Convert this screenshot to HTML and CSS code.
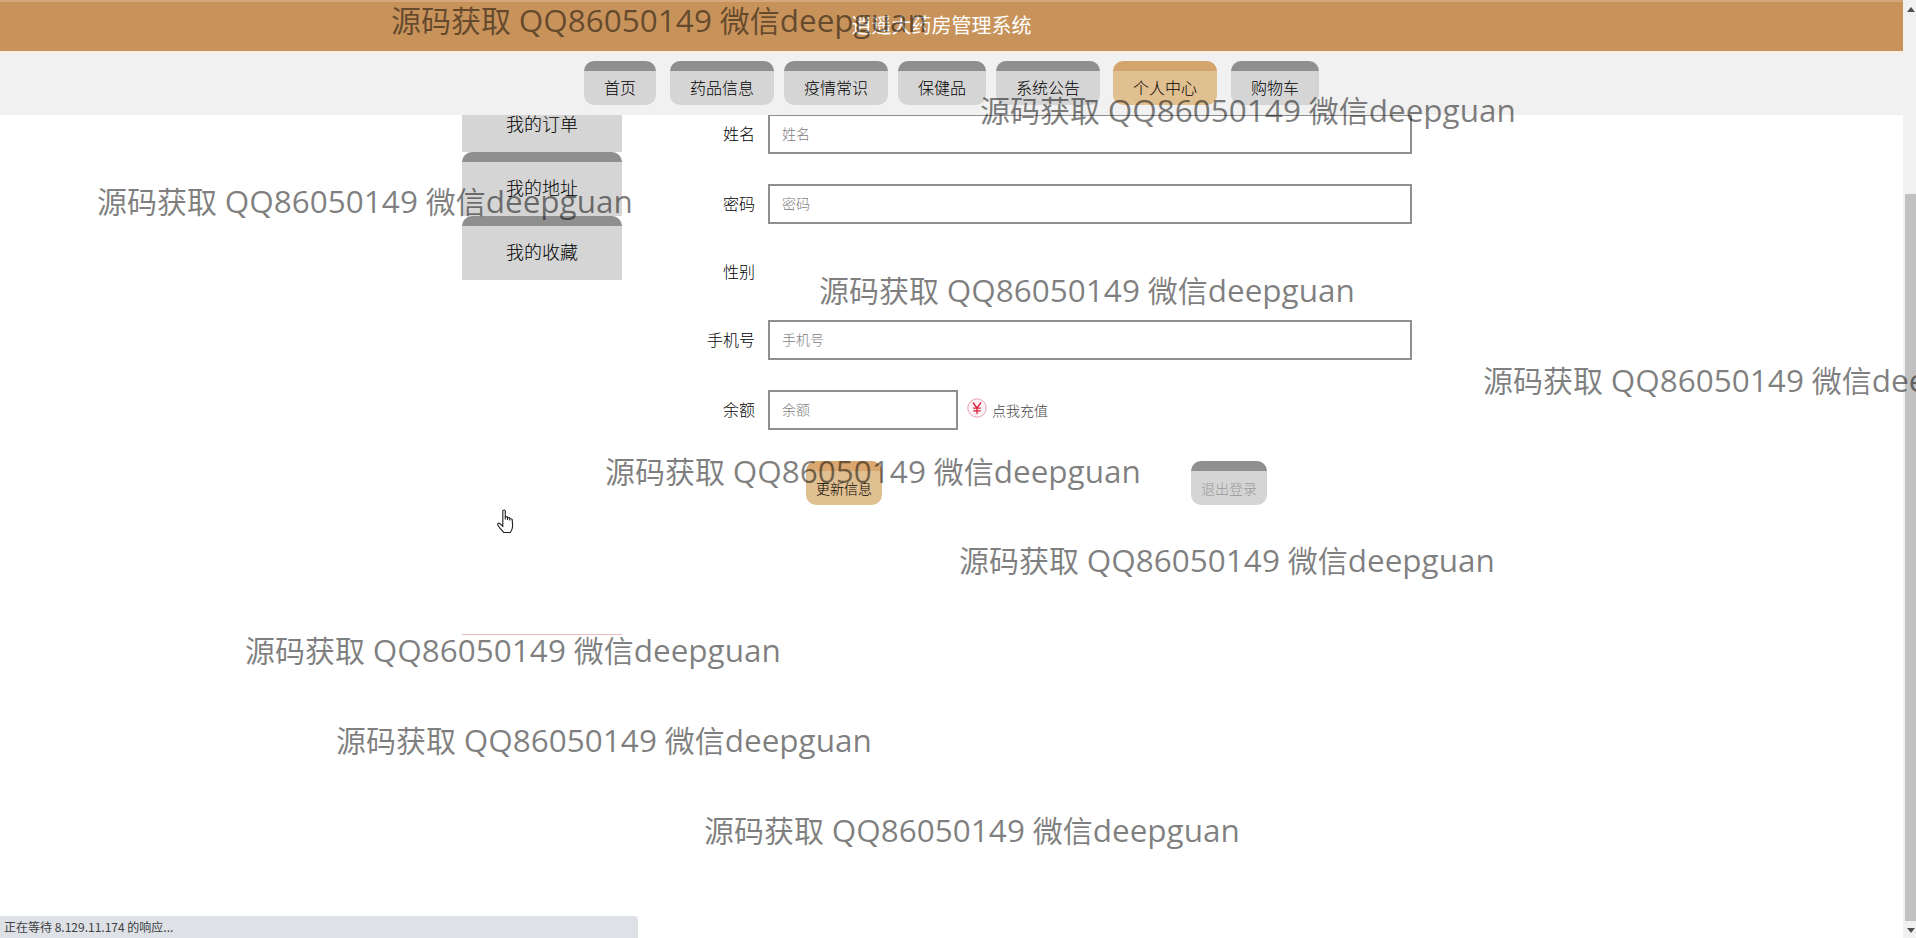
FILE: index.html
```html
<!DOCTYPE html>
<html lang="zh-CN">

<head>
    <meta charset="UTF-8">
    <title>逍遥大药房管理系统</title>
    <link rel="stylesheet" href="styles.css">
</head>

<body>
    <div class="shell">
        <div class="main">
            <div class="top">
                <div class="title">逍遥大药房管理系统</div>
                <div class="nav">
                    <a class="tab">首页</a>
                    <a class="tab">药品信息</a>
                    <a class="tab">疫情常识</a>
                    <a class="tab">保健品</a>
                    <a class="tab">系统公告</a>
                    <a class="tab tab-active">个人中心</a>
                    <a class="tab">购物车</a>
                </div>
            </div>

            <div class="content">
                <div class="side">
                    <a class="side-item">我的订单</a>
                    <a class="side-item">我的地址</a>
                    <a class="side-item">我的收藏</a>
                    <div class="side-rule"></div>
                </div>

                <form class="form">
                    <div class="row">
                        <label class="label">姓名</label>
                        <input class="field" type="text" placeholder="姓名">
                    </div>
                    <div class="row">
                        <label class="label">密码</label>
                        <input class="field" type="text" placeholder="密码">
                    </div>
                    <div class="row row-sex">
                        <label class="label">性别</label>
                    </div>
                    <div class="row">
                        <label class="label">手机号</label>
                        <input class="field" type="text" placeholder="手机号">
                    </div>
                    <div class="row">
                        <label class="label">余额</label>
                        <input class="field field-short" type="text" placeholder="余额">
                        <span class="charge">
                            <svg class="charge-icon" viewBox="0 0 20 20">
                                <circle cx="10" cy="10" r="9.2" fill="#fdf3f5" stroke="#e6a3b0" stroke-width="1"></circle>
                                <path d="M6 4.5 10 9.8 14 4.5M10 9.8V16M6.2 10.2H13.8M6.2 12.8H13.8" fill="none" stroke="#d81e3c" stroke-width="1.3"></path>
                            </svg>
                            <span class="charge-text">点我充值</span>
                        </span>
                    </div>
                    <div class="actions">
                        <a class="btn btn-save">更新信息</a>
                        <a class="btn btn-out">退出登录</a>
                    </div>
                </form>
            </div>

            <!-- pointer of the screen recording -->
            <svg class="pointer" viewBox="0 0 17 24" preserveAspectRatio="none">
                <path d="M5.2 2C5.2.6 7.4.6 7.4 2V10 8.2C7.4 7 9.4 7 9.4 8.2V10.5 9C9.4 7.9 11.4 7.9 11.4 9V11 10C11.4 9 13.6 9 13.6 10.2L14 16C14 19 13 21 12 22.5H6C5 21 3.5 19.5 2 17.5L.8 15.5C.2 14 1.5 13 2.6 14L5.2 16.5Z" fill="#fff" stroke="#222" stroke-width="1"></path>
            </svg>
        </div>

        <div class="scrollbar">
            <div class="arrow arrow-up"></div>
            <div class="thumb"></div>
            <div class="arrow arrow-down"></div>
        </div>

        <div class="status">正在等待 8.129.11.174 的响应...</div>

        <div class="marks">
            <span class="mark">源码获取 <span class="mark-en">QQ86050149</span> 微信<span class="mark-en">deepguan</span></span>
            <span class="mark">源码获取 <span class="mark-en">QQ86050149</span> 微信<span class="mark-en">deepguan</span></span>
            <span class="mark">源码获取 <span class="mark-en">QQ86050149</span> 微信<span class="mark-en">deepguan</span></span>
            <span class="mark">源码获取 <span class="mark-en">QQ86050149</span> 微信<span class="mark-en">deepguan</span></span>
            <span class="mark">源码获取 <span class="mark-en">QQ86050149</span> 微信<span class="mark-en">deepguan</span></span>
            <span class="mark">源码获取 <span class="mark-en">QQ86050149</span> 微信<span class="mark-en">deepguan</span></span>
            <span class="mark">源码获取 <span class="mark-en">QQ86050149</span> 微信<span class="mark-en">deepguan</span></span>
            <span class="mark">源码获取 <span class="mark-en">QQ86050149</span> 微信<span class="mark-en">deepguan</span></span>
            <span class="mark">源码获取 <span class="mark-en">QQ86050149</span> 微信<span class="mark-en">deepguan</span></span>
            <span class="mark">源码获取 <span class="mark-en">QQ86050149</span> 微信<span class="mark-en">deepguan</span></span>
        </div>
    </div>
</body>

</html>
```
FILE: styles.css
```css
html,
body {
    margin: 0;
    padding: 0;
    height: 100%;
    overflow: hidden;
}

body {
    font-family: "Noto Sans CJK SC", "Liberation Sans", sans-serif;
    font-weight: 300;
    background-color: #fff;
    color: #000;
}

.shell {
    position: relative;
    display: flex;
    height: 938px;
    overflow: hidden;
}

.main {
    position: relative;
    flex: 1;
    overflow: hidden;
}

/* title and nav stay on top of the scrolled page */
.top {
    position: absolute;
    top: 0;
    left: 0;
    right: 0;
    z-index: 2;
    background-color: #f1f1f1;
}

.title {
    height: 53px;
    padding: 0 20px 5px 0;
    box-sizing: border-box;
    display: flex;
    justify-content: center;
    align-items: center;
    font-size: 20px;
    font-weight: 400;
    color: #fff;
    background-color: #c8935b;
    border-top: 2px solid #d6a77c;
    border-bottom: 2px solid #fbeee0;
}

.nav {
    height: 62px;
    padding-top: 8px;
    box-sizing: border-box;
    display: flex;
    justify-content: center;
    gap: 10px;
}

.tab {
    height: 44px;
    padding: 0 20px 2px;
    box-sizing: border-box;
    display: flex;
    align-items: center;
    font-size: 16px;
    background-color: #d5d5d5;
    border-top: 10px solid #8f8f8f;
    border-radius: 10px;
}

.tab:nth-child(2),
.tab:nth-child(7) {
    margin-left: 4px;
}

.tab:nth-child(6) {
    margin-left: 3px;
}

.tab-active {
    background-color: #e0bf91;
    border-top-color: #d4a46e;
}

.content {
    display: flex;
    padding: 88px 0 0 462px;
}

.side {
    width: 160px;
}

.side-item {
    height: 64px;
    padding-bottom: 5px;
    box-sizing: border-box;
    display: flex;
    justify-content: center;
    align-items: center;
    font-size: 18px;
    background-color: #d5d5d5;
    border-top: 10px solid #8f8f8f;
    border-radius: 10px 10px 0 0;
}

.side-rule {
    margin-top: 354px;
    height: 1px;
    background-color: #eebcbc;
}

.form {
    margin: 26px 0 0 33px;
}

.row {
    display: flex;
    align-items: center;
    height: 40px;
    margin-bottom: 30px;
}

.row-sex {
    height: 36px;
}

.label {
    width: 100px;
    margin: -2px 13px 0 0;
    text-align: right;
    font-size: 16px;
}

.field {
    width: 644px;
    height: 40px;
    padding: 0 12px 2px;
    box-sizing: border-box;
    font-family: inherit;
    font-weight: 300;
    font-size: 14px;
    background-color: #fff;
    border: 2px solid #8f8f8f;
    outline: none;
}

.field::placeholder {
    color: #808080;
}

.field-short {
    width: 190px;
}

.charge {
    display: flex;
    align-items: center;
    margin-left: 9px;
}

.charge-icon {
    width: 20px;
    height: 20px;
    margin-top: -4px;
}

.charge-text {
    margin-left: 5px;
    font-size: 14px;
    color: #444;
}

.actions {
    display: flex;
    gap: 309px;
    padding: 1px 0 0 151px;
}

.btn {
    width: 76px;
    height: 44px;
    box-sizing: border-box;
    display: flex;
    justify-content: center;
    align-items: center;
    font-size: 14px;
    border-top: 10px solid #8f8f8f;
    border-radius: 10px;
    background-color: #d5d5d5;
}

.btn-save {
    background-color: #e0bf91;
    border-top-color: #d9a76f;
}

.btn-out {
    color: #999;
}

.pointer {
    position: absolute;
    left: 497px;
    top: 509px;
    width: 19px;
    height: 25px;
}

.scrollbar {
    width: 13px;
    display: flex;
    flex-direction: column;
    background-color: #f1f1f1;
}

.arrow {
    height: 0;
    width: 0;
    margin-left: 4px;
    border-left: 4px solid transparent;
    border-right: 4px solid transparent;
}

.arrow-up {
    margin-top: 7px;
    border-bottom: 5px solid #505050;
}

.thumb {
    margin: 182px 0 7px 2px;
    height: 727px;
    background-color: #c1c1c1;
}

.arrow-down {
    margin-top: 0;
    border-top: 5px solid #505050;
}

.status {
    position: absolute;
    left: 0;
    bottom: 0;
    z-index: 3;
    width: 638px;
    height: 22px;
    padding-left: 4px;
    box-sizing: border-box;
    font-size: 12px;
    line-height: 21px;
    font-weight: 400;
    color: #3c4043;
    background-color: #dee1e6;
    border-top-right-radius: 4px;
}

/* watermark goes over everything, scrollbar too */
.marks {
    position: absolute;
    top: 0;
    left: 0;
    right: 0;
    bottom: 0;
    z-index: 4;
    overflow: hidden;
    pointer-events: none;
}

.mark {
    position: absolute;
    white-space: nowrap;
    font-family: "Open Sans", "Noto Sans CJK SC", sans-serif;
    font-weight: 400;
    font-size: 30px;
    line-height: 40px;
    color: rgba(0, 0, 0, 0.5);
}

.mark-en {
    font-size: 31.5px;
}

.mark:nth-child(1) { left: 391px; top: 0; }
.mark:nth-child(2) { left: 980px; top: 90px; }
.mark:nth-child(3) { left: 97px; top: 181px; }
.mark:nth-child(4) { left: 819px; top: 270px; }
.mark:nth-child(5) { left: 1483px; top: 360px; }
.mark:nth-child(6) { left: 605px; top: 451px; }
.mark:nth-child(7) { left: 959px; top: 540px; }
.mark:nth-child(8) { left: 245px; top: 630px; }
.mark:nth-child(9) { left: 336px; top: 720px; }
.mark:nth-child(10) { left: 704px; top: 810px; }
```
